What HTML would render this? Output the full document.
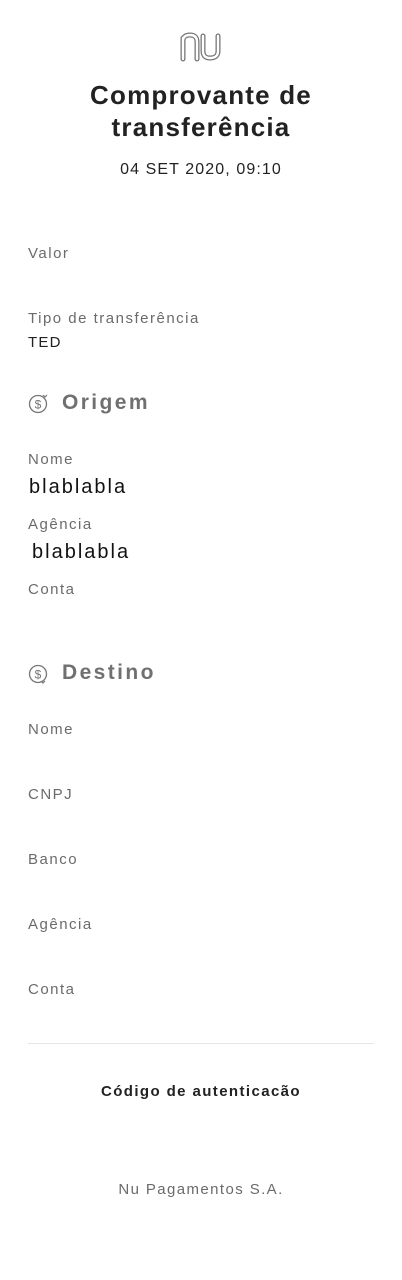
<!DOCTYPE html>
<html><head><meta charset="utf-8"><style>
*{margin:0;padding:0;box-sizing:border-box}
body{width:402px;height:1280px;background:#fff;position:relative;font-family:"Liberation Sans",sans-serif;overflow:hidden}
.a{position:absolute;white-space:nowrap}
.lbl{left:28px;font-size:15px;color:#6b6b6b;letter-spacing:1.5px}
.val{left:28px;font-size:15px;color:#222;letter-spacing:1.2px}
.big{font-size:20px;color:#111;letter-spacing:2px}
h1{position:absolute;left:0;width:402px;text-align:center;font-size:26px;font-weight:bold;color:#222;line-height:32px;top:79px;letter-spacing:1.2px}
.sec{left:62px;font-size:21px;font-weight:bold;color:#707070;letter-spacing:2.4px}
</style></head><body>
<svg class="a" style="left:180px;top:32px" width="42" height="30" viewBox="0 0 42 30">
<g fill="none" stroke-linecap="round" stroke-linejoin="round">
<path d="M3 27 V6 M3 9 Q3 3 10 3 Q17 3 17 10 V27 M23 4 V19 Q23 26 30 26 Q38 26 38 19 V4" stroke="#777" stroke-width="5"/>
<path d="M3 27 V6 M3 9 Q3 3 10 3 Q17 3 17 10 V27 M23 4 V19 Q23 26 30 26 Q38 26 38 19 V4" stroke="#fff" stroke-width="2.4"/>
</g></svg>
<h1>Comprovante de<br>transferência</h1>
<div class="a" style="left:0;width:402px;text-align:center;top:161px;font-size:16px;color:#222;letter-spacing:1.1px">04 SET 2020, 09:10</div>
<div class="a lbl" style="top:245px">Valor</div>
<div class="a lbl" style="top:310px">Tipo de transferência</div>
<div class="a val" style="top:334px">TED</div>
<svg class="a" style="left:27px;top:393px" width="22" height="22" viewBox="0 0 22 22"><circle cx="11" cy="11" r="8.5" fill="none" stroke="#777" stroke-width="1.3"/><text x="11" y="15.5" text-anchor="middle" font-size="12" fill="#777" font-family="Liberation Sans">$</text><path d="M16 2 l2 2 l2-2" fill="none" stroke="#777" stroke-width="1.2"/></svg>
<div class="a sec" style="top:391px">Origem</div>
<div class="a lbl" style="top:451px">Nome</div>
<div class="a val big" style="top:476px;left:29px">blablabla</div>
<div class="a lbl" style="top:516px">Agência</div>
<div class="a val big" style="top:541px;left:32px">blablabla</div>
<div class="a lbl" style="top:581px">Conta</div>
<svg class="a" style="left:27px;top:663px" width="22" height="22" viewBox="0 0 22 22"><circle cx="11" cy="11" r="8.5" fill="none" stroke="#777" stroke-width="1.3"/><text x="11" y="15.5" text-anchor="middle" font-size="12" fill="#777" font-family="Liberation Sans">$</text><path d="M14 18 l2 2 l2-2" fill="none" stroke="#777" stroke-width="1.2"/></svg>
<div class="a sec" style="top:661px">Destino</div>
<div class="a lbl" style="top:721px">Nome</div>
<div class="a lbl" style="top:786px">CNPJ</div>
<div class="a lbl" style="top:851px">Banco</div>
<div class="a lbl" style="top:916px">Agência</div>
<div class="a lbl" style="top:981px">Conta</div>
<div class="a" style="left:28px;top:1043px;width:346px;height:1px;background:#e6e6e6"></div>
<div class="a" style="left:0;width:402px;text-align:center;top:1083px;height:17px;overflow:hidden;font-size:15px;font-weight:bold;color:#222;letter-spacing:1.4px">Código de autenticacão</div>
<div class="a" style="left:0;width:402px;text-align:center;top:1181px;font-size:15px;color:#6b6b6b;letter-spacing:1.4px">Nu Pagamentos S.A.</div>
</body></html>
